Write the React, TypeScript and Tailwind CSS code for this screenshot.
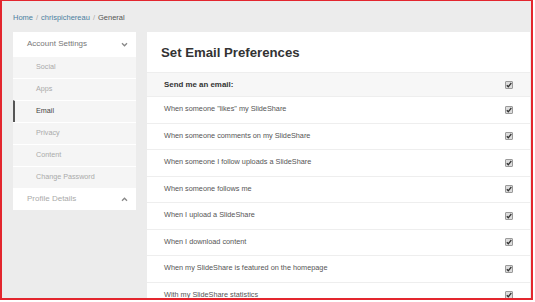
import React from 'react';

const subItems = ['Social', 'Apps', 'Email', 'Privacy', 'Content', 'Change Password'];

const prefs = [
  'When someone "likes" my SlideShare',
  'When someone comments on my SlideShare',
  'When someone I follow uploads a SlideShare',
  'When someone follows me',
  'When I upload a SlideShare',
  'When I download content',
  'When my SlideShare is featured on the homepage',
  'With my SlideShare statistics',
];

const Check: React.FC = () => (
  <span className="w-[8px] h-[8px] border border-[#9a9a9a] bg-[#dcdcdc] rounded-[1px] flex items-center justify-center">
    <svg width="6" height="6" viewBox="0 0 6 6">
      <path d="M0.8 3.2 L2.3 4.8 L5.3 1" stroke="#333" strokeWidth="1.3" fill="none" />
    </svg>
  </span>
);

const Chevron: React.FC<{ up?: boolean }> = ({ up }) => (
  <svg width="7" height="5" viewBox="0 0 8 6" className={up ? 'rotate-180' : ''}>
    <path d="M1 1.5 L4 4.5 L7 1.5" stroke="#888" strokeWidth="1.6" fill="none" />
  </svg>
);

export default function App() {
  return (
    <div className="w-[535px] h-[302px] bg-white overflow-hidden antialiased" style={{ fontFamily: '"Liberation Sans", Arial, sans-serif' }}>
      <div className="w-[533px] h-[300px] border-2 border-t-[1.5px] border-[#e3262e] bg-[#ececec] overflow-hidden">
        {/* Breadcrumb */}
        <div className="pl-[11px] pt-[11px] h-[31px] text-[7.5px] text-[#aaa]">
          <span className="text-[#4b7fa0]">Home</span>
          <span className="mx-[3px]">/</span>
          <span className="text-[#4b7fa0]">chrispichereau</span>
          <span className="mx-[3px]">/</span>
          <span className="text-[#555]">General</span>
        </div>

        <div className="flex pl-[11px] gap-[11px]">
          {/* Sidebar */}
          <div className="w-[123px] shrink-0">
            <div className="h-[24px] bg-white flex items-center justify-between pl-[14px] pr-[8px] text-[8px] text-[#777]">
              <span>Account Settings</span>
              <Chevron />
            </div>
            {subItems.map((item) => (
              <div
                key={item}
                className={`h-[22px] flex items-center bg-[#f5f5f5] border-t border-white text-[7.2px] ${
                  item === 'Email'
                    ? 'pl-[21px] border-l-2 border-l-[#555] text-[#444]'
                    : 'pl-[23px] text-[#aaa]'
                }`}
              >
                {item}
              </div>
            ))}
            <div className="h-[22px] bg-white flex items-center justify-between pl-[14px] pr-[8px] text-[8px] text-[#aaa]">
              <span>Profile Details</span>
              <Chevron up />
            </div>
          </div>

          {/* Main panel */}
          <div className="w-[383px] bg-white">
            <div className="h-[40px] flex items-center pl-[14px] pt-[2px] text-[13.2px] font-bold text-[#333]">
              Set Email Preferences
            </div>
            <div className="h-[24px] bg-[#f7f7f7] border-t border-[#eee] flex items-center justify-between pl-[17px] pr-[17px] text-[7.9px] font-bold text-[#333]">
              <span>Send me an email:</span>
              <Check />
            </div>
            {prefs.map((p) => (
              <div
                key={p}
                className="h-[26.5px] border-t border-[#eee] flex items-center justify-between pl-[17px] pr-[17px] text-[7.3px] text-[#555]"
              >
                <span>{p}</span>
                <Check />
              </div>
            ))}
          </div>
        </div>
      </div>
    </div>
  );
}
